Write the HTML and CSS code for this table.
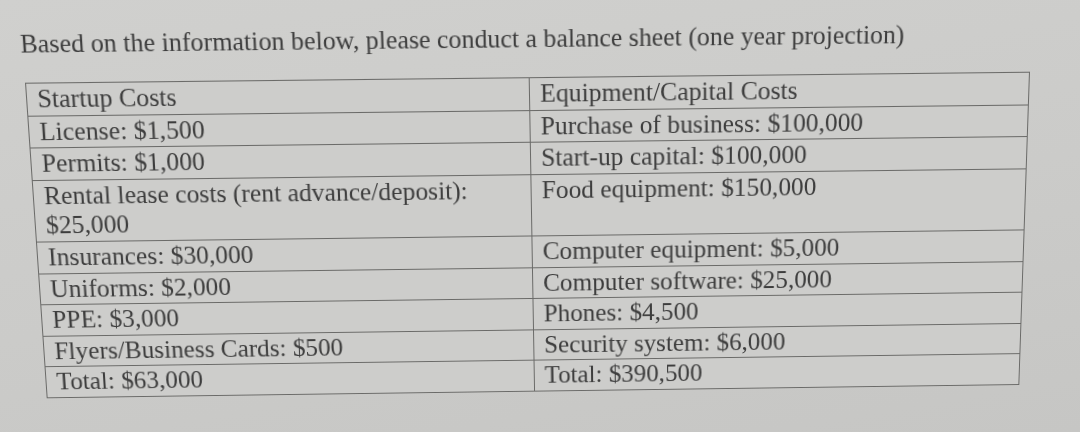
FILE: index.html
```html
<!DOCTYPE html>
<html lang="en">
<head>
<meta charset="utf-8">
<title>Balance sheet assignment</title>
<link rel="stylesheet" href="styles.css">
</head>
<body>
<div class="page">
  <p class="title">Based on the information below, please conduct a balance sheet (one year projection)</p>
  <table class="sheet">
    <tr><td class="left">Startup Costs</td><td>Equipment/Capital Costs</td></tr>
    <tr><td class="left">License: $1,500</td><td>Purchase of business: $100,000</td></tr>
    <tr><td class="left">Permits: $1,000</td><td>Start-up capital: $100,000</td></tr>
    <tr><td class="left">Rental lease costs (rent advance/deposit): $25,000</td><td>Food equipment: $150,000</td></tr>
    <tr><td class="left">Insurances: $30,000</td><td>Computer equipment: $5,000</td></tr>
    <tr><td class="left">Uniforms: $2,000</td><td>Computer software: $25,000</td></tr>
    <tr><td class="left">PPE: $3,000</td><td>Phones: $4,500</td></tr>
    <tr><td class="left">Flyers/Business Cards: $500</td><td>Security system: $6,000</td></tr>
    <tr><td class="left">Total: $63,000</td><td>Total: $390,500</td></tr>
  </table>
</div>
</body>
</html>
```
FILE: styles.css
```css
html, body {
  margin: 0;
  padding: 0;
}
body {
  width: 1080px;
  height: 432px;
  overflow: hidden;
  background: linear-gradient(170deg, #d0d0ce 0%, #cbcbc9 55%, #c6c6c4 100%);
  font-family: "Liberation Serif", "Times New Roman", serif;
  color: #3d3d3d;
}
/* the photographed document: flat layout, then projected onto the photo's plane */
.page {
  box-sizing: border-box;
  width: 1080px;
  height: 432px;
  padding: 26.5px 58px 0 36px;
  font-size: 25.3px;
  transform-origin: 0 0;
  transform: matrix3d(1.037445, -0.0106116, 0, 0.0000089619, 0.074489, 1.053311, 0, 0.000106991, 0, 0, 1, 0, -18.0132, 0.59597, 0, 1);
  filter: blur(0.3px);
}
.title {
  margin: 0 0 24.5px -2px;
  line-height: 28px;
  white-space: nowrap;
}
.sheet {
  width: 986px;
  border-collapse: collapse;
  table-layout: fixed;
  background: #cdcdcb;
}
.sheet td {
  border: 1px solid #6a6a68;
  padding: 0 9px 1px 10px;
  line-height: 29.6px;
  vertical-align: top;
}
.sheet td.left {
  width: 472px;
}
```
